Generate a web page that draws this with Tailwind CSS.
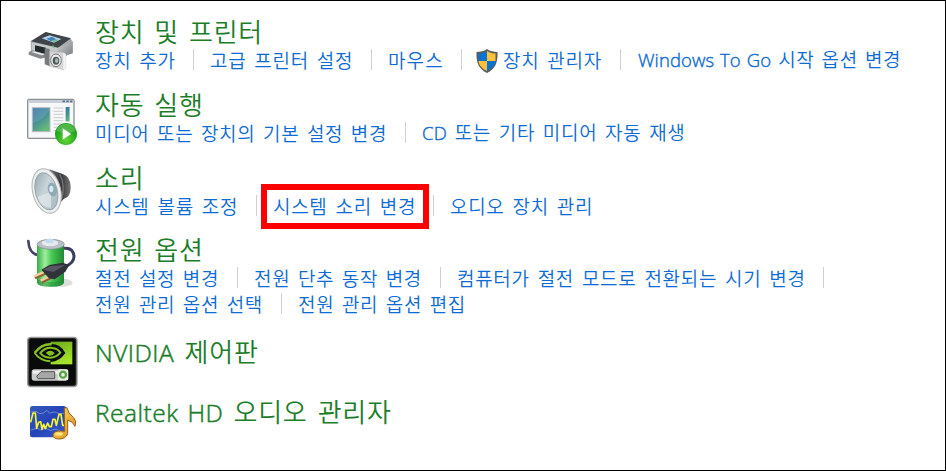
<!DOCTYPE html>
<html lang="ko">
<head>
<meta charset="utf-8">
<title>제어판</title>
<script src="https://cdn.jsdelivr.net/npm/@tailwindcss/browser@4"></script>
</head>
<body class="bg-white">
<main class="w-[946px] h-[471px] border border-black pt-[17px] pl-[19px] overflow-hidden font-['Noto_Sans_CJK_KR',sans-serif] whitespace-nowrap text-[19px] tracking-[0.7px] [word-spacing:1.9px] text-[#0c6bd4] font-[350]">

<section class="flex h-[73px]">
  <svg class="w-[60px] h-[56px] mt-px mr-[15px] shrink-0 overflow-visible" viewBox="15 12 180 168">
    <defs><linearGradient id="pf" x2="1" y2="1"><stop stop-color="#d0d2d3"/><stop offset="1" stop-color="#75797b"/></linearGradient></defs>
    <path d="M47 78L92 52L167 71L173 80V113L132 131L48 108Z" fill="#a6aaac"/>
    <path d="M48 79L92 51L168 70L129 98Z" fill="#3e4447"/>
    <path d="M129 98L173 79V115L132 128Z" fill="url(#pf)"/>
    <path d="M50 82L128 99V133L51 109Z" fill="#c7cacb"/>
    <path d="M80 70L104 61L139 72L117 83Z" fill="#b8d5ee"/>
    <path d="M94 71L111 65L124 73L108 79Z" fill="#3c83ba"/><path d="M110 78L124 73L131 75L117 81Z" fill="#69bb8a"/>
    <path d="M60 91L93 98V117L60 110Z" fill="#24292b"/>
    <path d="M41 111L53 106L90 117V128L76 131L41 119Z" fill="#85898b"/><path d="M49 111L81 121L89 118L57 109Z" fill="#eceeef"/>
    <path d="M89 99L104 102V154L89 148Z" fill="#777b7d"/>
    <path d="M104 108L145 112L152 117V159L145 164L104 154Z" fill="#d5d6d7" stroke="#999" stroke-width="1"/>
    <path d="M145 113L152 117V160L145 163Z" fill="#f5f5f5"/>
    <ellipse cx="123" cy="136" rx="16" ry="19" fill="#eee" stroke="#777" stroke-width="3"/>
    <ellipse cx="123" cy="137" rx="10" ry="12" fill="#505759"/><ellipse cx="125" cy="137" rx="5" ry="7" fill="#a3bbb8"/>
    <path d="M112 91l5 1v6l-5-1z" fill="#5dc46b"/>
  </svg>
  <div>
    <h2 class="h-7 leading-[26px] text-[26px] tracking-[0.8px] [word-spacing:1.8px] text-[#1c7d28]">장치 및 프린터</h2>
    <div class="flex h-[26px] items-center gap-4 leading-[21px]">
      <a class="w-[99px] h-[21px] border-r border-[#d0d0d0]">장치 추가</a>
      <a class="w-[162px] h-[21px] border-r border-[#d0d0d0]">고급 프린터 설정</a>
      <a class="w-[74px] h-[21px] border-r border-[#d0d0d0] tracking-[1.1px]">마우스</a>
      <a class="w-[143px] h-[21px] border-r border-[#d0d0d0] flex items-center">
        <svg class="w-[22px] h-6 -ml-[2px] mr-[5px] mt-[3px] shrink-0" viewBox="0 0 22 24">
          <path d="M11 0C8 2.3 4.500 3 .5 3C0 14 3 20 11 24C19 20 22 14 21.500 3C17.500 3 14 2.300 11 0Z" fill="#5b5d5b"/>
          <path d="M11 2C8 4 5 4.500 2.500 4.600V12H11Z" fill="#0b72d1"/><path d="M11 2C14 4 17 4.500 19.500 4.600V12H11Z" fill="#ffc13b"/>
          <path d="M2.500 12H11V22C6 19.800 3 16.500 2.500 12Z" fill="#ffc13b"/><path d="M19.500 12H11V22C16 19.800 19 16.500 19.500 12Z" fill="#0b72d1"/>
        </svg>장치 관리자</a>
      <a class="pl-px"><span class="font-['Open_Sans',sans-serif] font-light text-[18.5px] tracking-[0.1px] [word-spacing:1px] [-webkit-text-stroke:0.4px]">Windows To Go</span><span class="[word-spacing:1px]"> 시작 옵션 변경</span></a>
    </div>
  </div>
</section>

<section class="flex h-[73px]">
  <svg class="w-[60px] h-[56px] mt-px mr-[15px] shrink-0 overflow-visible" viewBox="15 21 180 168">
    <defs><linearGradient id="sc" x2=".6" y2="1"><stop stop-color="#3771b2"/><stop offset=".5" stop-color="#438c9a"/><stop offset="1" stop-color="#66ba79"/></linearGradient>
    <radialGradient id="go" cy=".75"><stop stop-color="#65d536"/><stop offset="1" stop-color="#21a51d"/></radialGradient></defs>
    <rect x="38" y="43" width="139" height="117" rx="4" fill="#f7f8f9" stroke="#8d9195" stroke-width="4"/>
    <path d="M40 45H175V54H40Z" fill="#c8cfd7"/><path d="M143 49h7m4 0h7m4 0h7" stroke="#596f90" stroke-width="5"/>
    <rect x="52" y="68" width="53" height="72" fill="url(#sc)" stroke="#b7bdc2" stroke-width="3"/>
    <path d="M54 114Q82 108 103 76V70H54Z" fill="#fff" opacity=".12"/>
    <path d="M116 69h29M116 79h29M116 88h29M116 98h29M116 107h29M116 117h22M116 127h10M116 137h8" stroke="#c9cbcc" stroke-width="3"/>
    <rect x="152" y="66" width="12" height="43" fill="url(#sc)"/>
    <circle cx="153" cy="147" r="33" fill="url(#go)"/><path d="M124 137Q133 116 153 116T182 137Q153 151 124 137Z" fill="#fff" opacity=".2"/>
    <path d="M143 130V164L168 147Z" fill="white"/>
  </svg>
  <div>
    <h2 class="h-7 leading-[26px] text-[26px] tracking-[0.8px] [word-spacing:1.8px] text-[#1c7d28]">자동 실행</h2>
    <div class="flex h-[26px] items-center gap-4 leading-[21px]">
      <a class="w-[311px] h-[21px] border-r border-[#d0d0d0] [word-spacing:1.5px]">미디어 또는 장치의 기본 설정 변경</a>
      <a><span class="font-['Open_Sans',sans-serif] font-light text-[18.5px] tracking-[0.2px] [-webkit-text-stroke:0.4px]">CD</span><span class="[word-spacing:1.7px]"> 또는 기타 미디어 자동 재생</span></a>
    </div>
  </div>
</section>

<section class="flex h-[72px]">
  <svg class="w-[60px] h-[56px] mt-px mr-[15px] shrink-0 overflow-visible" viewBox="15 15 180 168">
    <defs><linearGradient id="sb"><stop stop-color="#777"/><stop offset=".55" stop-color="#343638"/><stop offset="1" stop-color="#777"/></linearGradient>
    <linearGradient id="cn" x2=".8" y2="1"><stop stop-color="#8fa1aa"/><stop offset=".5" stop-color="#cad5da"/><stop offset="1" stop-color="#a8b8bf"/></linearGradient></defs>
    <path d="M103 28L143 42Q166 49 167 80T147 116L117 147Z" fill="url(#sb)"/>
    <path d="M134 42Q153 77 138 124" fill="none" stroke="#777" stroke-width="4"/>
    <ellipse cx="95" cy="93" rx="42" ry="68" transform="rotate(-14 95 93)" fill="#eeefef" stroke="#b2b4b5" stroke-width="3"/>
    <ellipse cx="94" cy="94" rx="33" ry="57" transform="rotate(-14 94 94)" fill="url(#cn)" stroke="#86949a" stroke-width="2"/>
    <path d="M67 111L108 96L108 143Q81 144 67 111Z" fill="#e2eaed" opacity=".7"/>
    <ellipse cx="112" cy="89" rx="13" ry="21" transform="rotate(-14 112 89)" fill="#8eaab7"/>
    <ellipse cx="109" cy="87" rx="6" ry="10" fill="#d8e9f0"/>
  </svg>
  <div>
    <h2 class="h-7 leading-[26px] text-[26px] tracking-[0.8px] [word-spacing:1.8px] text-[#1c7d28]">소리</h2>
    <div class="flex h-[26px] items-center gap-4 leading-[21px]">
      <a class="w-[162px] h-[21px] border-r border-[#d0d0d0]">시스템 볼륨 조정</a>
      <a class="relative w-[161px] h-[21px] border-r border-[#d0d0d0]">시스템 소리 변경<span class="absolute -left-[12px] -top-[11px] w-[168px] h-[45px] border-6 border-[#ff0000]"></span></a>
      <a>오디오 장치 관리</a>
    </div>
  </div>
</section>

<section class="flex h-[102px]">
  <svg class="w-[60px] h-[56px] mt-px mr-[15px] shrink-0 overflow-visible" viewBox="15 21 180 168">
    <defs><linearGradient id="bt"><stop stop-color="#36ad43"/><stop offset=".3" stop-color="#a0ee9e"/><stop offset=".55" stop-color="#47c950"/><stop offset="1" stop-color="#218836"/></linearGradient></defs>
    <ellipse cx="128" cy="158" rx="45" ry="13" fill="#ddd"/>
    <path d="M40 33Q42 69 67 75" fill="none" stroke="#454567" stroke-width="8" stroke-linecap="round"/>
    <path d="M66 43V158Q69 170 106 170T147 158V43Z" fill="url(#bt)"/>
    <path d="M66 147V158Q69 170 106 170T147 158V146Q128 156 106 156T66 147Z" fill="#23893a" opacity=".5"/>
    <ellipse cx="107" cy="43" rx="41" ry="15" fill="#b9c0c7" stroke="#7d888f" stroke-width="2"/>
    <ellipse cx="105" cy="39" rx="25" ry="10" fill="#e6ebef"/><ellipse cx="104" cy="33" rx="13" ry="7" fill="#bfdcf0"/>
    <path d="M147 55Q174 52 177 78Q178 99 149 110" fill="none" stroke="#3c3c60" stroke-width="9"/>
    <path d="M59 142L91 128M79 155L110 140" stroke="#8b6234" stroke-width="12"/><path d="M57 139L91 124M77 152L106 138" stroke="#efd29c" stroke-width="7"/>
    <path d="M79 119L103 105L143 98L163 105L151 125L119 148L102 145Z" fill="#30323c"/>
    <path d="M84 119L104 109L151 105L115 126Z" fill="#555761"/>
  </svg>
  <div>
    <h2 class="h-7 leading-[26px] text-[26px] tracking-[0.8px] [word-spacing:1.8px] text-[#1c7d28]">전원 옵션</h2>
    <div class="flex h-[26px] items-center gap-4 leading-[21px]">
      <a class="w-[143px] h-[21px] border-r border-[#d0d0d0] [word-spacing:1.5px]">절전 설정 변경</a>
      <a class="w-[187px] h-[21px] border-r border-[#d0d0d0] [word-spacing:1.5px]">전원 단추 동작 변경</a>
      <a class="w-[367px] h-[21px] border-r border-[#d0d0d0]">컴퓨터가 절전 모드로 전환되는 시기 변경</a>
    </div>
    <div class="flex h-[26px] items-center gap-4 leading-[21px] [word-spacing:1.5px]">
      <a class="w-[187px] h-[21px] border-r border-[#d0d0d0]">전원 관리 옵션 선택</a>
      <a>전원 관리 옵션 편집</a>
    </div>
  </div>
</section>

<section class="flex h-[60px]">
  <svg class="w-[60px] h-[56px] mt-px mr-[15px] shrink-0 overflow-visible" viewBox="15 27 180 168">
    <defs><linearGradient id="nv" x2=".4" y2="1"><stop stop-color="#69a719"/><stop offset="1" stop-color="#a6e32c"/></linearGradient></defs>
    <rect x="38" y="22" width="148" height="148" rx="10" fill="#292b2c" stroke="#999" stroke-width="4"/>
    <rect x="43" y="27" width="138" height="138" rx="7" fill="#090a0a"/>
    <path d="M107 35H172V103H107Z" fill="url(#nv)"/>
    <path d="M59 69Q81 42 109 42T151 69Q134 94 107 96T59 69Z" fill="#090a0a"/>
    <path d="M59 69Q80 41 110 43" fill="none" stroke="#83c31b" stroke-width="7"/>
    <path d="M59 69Q75 92 106 94" fill="none" stroke="#83c31b" stroke-width="6"/>
    <path d="M76 69Q92 51 112 54Q129 56 136 68Q123 83 106 83Q85 82 76 69Z" fill="none" stroke="#83c31b" stroke-width="6"/>
    <path d="M92 69Q101 60 111 63L119 69Q113 78 103 77Z" fill="#83c31b"/>
    <rect x="50" y="118" width="108" height="34" rx="8" fill="#cacaca"/><path d="M54 122H154V131H54Z" fill="#eee"/>
    <path d="M65 139L78 125H119V146H69Z" fill="#a7a7a7" stroke="#555" stroke-width="3"/>
    <rect x="128" y="118" width="32" height="33" rx="5" fill="#e9efe3"/><circle cx="144" cy="134" r="9" fill="none" stroke="#58a449" stroke-width="7"/>
  </svg>
  <h2 class="h-7 leading-[26px] text-[26px] tracking-[0.8px] [word-spacing:2.2px] text-[#1c7d28]"><span class="font-['Open_Sans',sans-serif] font-light text-[24.5px] tracking-[0.5px] [-webkit-text-stroke:0.5px]">NVIDIA</span> 제어판</h2>
</section>

<section class="flex h-[60px]">
  <svg class="w-[60px] h-[56px] mt-px mr-[15px] shrink-0 overflow-visible" viewBox="15 12 180 168">
    <defs><linearGradient id="wv" x2="1" y2="1"><stop stop-color="#3859b8"/><stop offset=".5" stop-color="#2443b9"/><stop offset="1" stop-color="#3b5ac9"/></linearGradient>
    <linearGradient id="nt" x2="1" y2="1"><stop stop-color="#ffe06a"/><stop offset="1" stop-color="#dc8a16"/></linearGradient></defs>
    <rect x="45" y="33" width="108" height="94" rx="7" fill="url(#wv)"/>
    <path d="M48 51L63 49L74 56L85 54L96 46L103 54L119 51L136 57L151 53M48 105L65 99L78 105L91 99L107 107L119 102L135 107" fill="none" stroke="#8fa5df" stroke-width="2"/>
    <path d="M47 82L54 54L61 54L65 100L71 82L77 80L81 103L86 88L91 101L98 84L103 95L109 95L114 73L120 73L124 91L132 58L138 58L143 91L148 91" fill="none" stroke="#f4f532" stroke-width="5" stroke-linejoin="round"/>
    <path d="M148 39L156 38Q158 55 176 68Q186 78 180 94Q174 79 158 75V116Q153 132 131 132Q113 131 114 119Q117 106 140 108L149 109Z" fill="url(#nt)" stroke="#946019" stroke-width="3"/>
    <ellipse cx="132" cy="117" rx="12" ry="5" fill="#ffe77d"/>
  </svg>
  <h2 class="h-7 leading-[26px] text-[26px] tracking-[0.8px] [word-spacing:2px] text-[#1c7d28]"><span class="font-['Open_Sans',sans-serif] font-light text-[24.5px] tracking-[0.5px] [-webkit-text-stroke:0.5px]">Realtek HD</span> 오디오 관리자</h2>
</section>
</main>
</body>
</html>
